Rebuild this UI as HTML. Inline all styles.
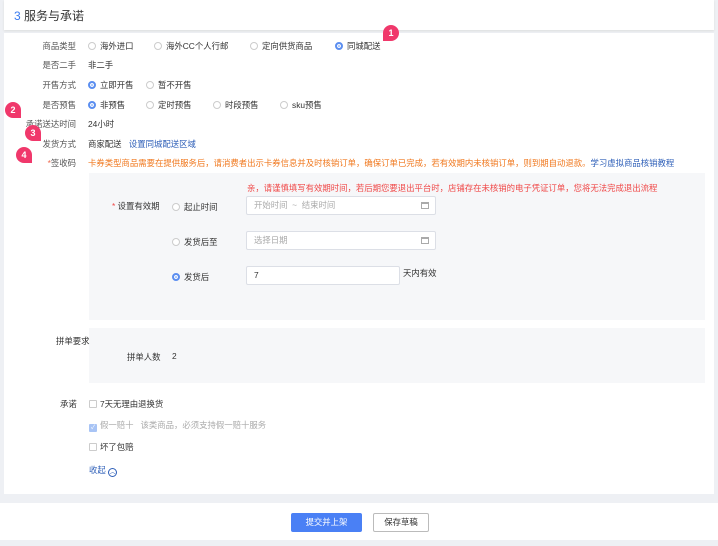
<!DOCTYPE html>
<html><head><meta charset="utf-8"><style>
*{margin:0;padding:0;box-sizing:border-box}
body{width:718px;height:546px;background:#eef0f4;font-family:"Liberation Sans","Noto Sans CJK SC",sans-serif;font-size:8.4px;color:#333;position:relative;overflow:hidden}
.abs{position:absolute;white-space:nowrap}
.card{position:absolute;background:#fff}
.lbl{position:absolute;text-align:right;width:76px;left:0;color:#555}
.r{display:inline-block;width:8px;height:8px;border:1px solid #ccc;border-radius:50%;vertical-align:-1px;margin-right:4px;background:#fff}
.r.on{border:2.5px solid #5b8ef0;background:#5b8ef0;box-shadow:inset 0 0 0 1.2px #fff}
.cb{display:inline-block;width:8px;height:8px;border:1px solid #ccc;border-radius:1px;vertical-align:-1px;margin-right:3px;background:#fff;color:#fff;font-size:6px;line-height:7px;text-align:center}
.inp{position:absolute;background:#fff;border:1px solid #dcdfe6;border-radius:2px;color:#aaa;padding-left:7px;line-height:17px}
.badge{position:absolute;width:16px;height:16px;background:#f0386b;color:#fff;font-weight:bold;font-size:9px;text-align:center;line-height:16px;border-radius:50% 50% 0 50%}
.cal{position:absolute;right:6px;top:5px;width:8px;height:7px;border:1px solid #aaa;border-top-width:2px}
</style></head><body>
<div class="card" style="left:4px;top:0;width:710px;height:30px;box-shadow:0 1px 2px #ddd"></div>
<div class="abs" style="left:14px;top:7px;font-size:12px"><span style="color:#3a7bf0">3</span> 服务与承诺</div>
<div class="card" style="left:4px;top:33px;width:710px;height:461px"></div>

<div class="lbl" style="top:40px">商品类型</div>
<div class="abs" style="left:88px;top:40px"><span class="r"></span>海外进口</div>
<div class="abs" style="left:154px;top:40px"><span class="r"></span>海外CC个人行邮</div>
<div class="abs" style="left:250px;top:40px"><span class="r"></span>定向供货商品</div>
<div class="abs" style="left:335px;top:40px"><span class="r on"></span>同城配送</div>
<div class="lbl" style="top:59px">是否二手</div>
<div class="abs" style="left:88px;top:59px">非二手</div>
<div class="lbl" style="top:79px">开售方式</div>
<div class="abs" style="left:88px;top:79px"><span class="r on"></span>立即开售</div>
<div class="abs" style="left:146px;top:79px"><span class="r"></span>暂不开售</div>
<div class="lbl" style="top:99px">是否预售</div>
<div class="abs" style="left:88px;top:99px"><span class="r on"></span>非预售</div>
<div class="abs" style="left:146px;top:99px"><span class="r"></span>定时预售</div>
<div class="abs" style="left:213px;top:99px"><span class="r"></span>时段预售</div>
<div class="abs" style="left:280px;top:99px"><span class="r"></span>sku预售</div>
<div class="lbl" style="top:118px">承诺送达时间</div>
<div class="abs" style="left:88px;top:118px">24小时</div>
<div class="lbl" style="top:138px">发货方式</div>
<div class="abs" style="left:88px;top:138px">商家配送 <span style="color:#2e5fb8;margin-left:5px">设置同城配送区域</span></div>
<div class="lbl" style="top:157px"><span style="color:#f06a50">*</span>签收码</div>
<div class="abs" style="left:88px;top:157px;color:#f0781e">卡券类型商品需要在提供服务后，请消费者出示卡券信息并及时核销订单，确保订单已完成，若有效期内未核销订单，则到期自动退款。<span style="color:#2e5fb8">学习虚拟商品核销教程</span></div>

<div class="abs" style="left:89px;top:173px;width:616px;height:147px;background:#f6f7f9"></div>
<div class="abs" style="left:247px;top:182px;color:#f04848">亲，请谨慎填写有效期时间，若后期您要退出平台时，店铺存在未核销的电子凭证订单，您将无法完成退出流程</div>
<div class="abs" style="left:112px;top:200px"><span style="color:#f04848">*</span> 设置有效期</div>
<div class="abs" style="left:172px;top:201px"><span class="r"></span>起止时间</div>
<div class="inp" style="left:246px;top:196px;width:190px;height:19px">开始时间 &nbsp;~ &nbsp;结束时间<span class="cal"></span></div>
<div class="abs" style="left:172px;top:236px"><span class="r"></span>发货后至</div>
<div class="inp" style="left:246px;top:231px;width:190px;height:19px">选择日期<span class="cal"></span></div>
<div class="abs" style="left:172px;top:271px"><span class="r on"></span>发货后</div>
<div class="inp" style="left:246px;top:266px;width:154px;height:19px;color:#333">7</div>
<div class="abs" style="left:403px;top:267px">天内有效</div>

<div class="abs" style="left:89px;top:328px;width:616px;height:55px;background:#f6f7f9"></div>
<div class="abs" style="left:56px;top:335px">拼单要求</div>
<div class="abs" style="left:127px;top:351px">拼单人数</div>
<div class="abs" style="left:172px;top:351px">2</div>

<div class="abs" style="left:60px;top:398px">承诺</div>
<div class="abs" style="left:89px;top:398px"><span class="cb"></span>7天无理由退换货</div>
<div class="abs" style="left:89px;top:419px;color:#aaa"><span class="cb" style="background:#a8c4f5;border-color:#a8c4f5">✓</span>假一赔十 &nbsp;&nbsp;该类商品，必须支持假一赔十服务</div>
<div class="abs" style="left:89px;top:441px"><span class="cb"></span>坏了包赔</div>
<div class="abs" style="left:89px;top:464px;color:#2e5fb8">收起 <span style="display:inline-block;width:9px;height:9px;border:1px solid #2e5fb8;border-radius:50%;text-align:center;line-height:8px;font-size:6px;vertical-align:-1px">︿</span></div>

<div class="card" style="left:0;top:503px;width:718px;height:37px"></div>
<div class="abs" style="left:291px;top:513px;width:71px;height:19px;background:#4a80f5;color:#fff;border-radius:2px;text-align:center;line-height:19px">提交并上架</div>
<div class="abs" style="left:373px;top:513px;width:56px;height:19px;border:1px solid #bbb;border-radius:2px;text-align:center;line-height:17px">保存草稿</div>

<div class="badge" style="left:383px;top:25px;border-radius:50% 50% 50% 0">1</div>
<div class="badge" style="left:5px;top:102px">2</div>
<div class="badge" style="left:25px;top:125px">3</div>
<div class="badge" style="left:16px;top:147px">4</div>
</body></html>
